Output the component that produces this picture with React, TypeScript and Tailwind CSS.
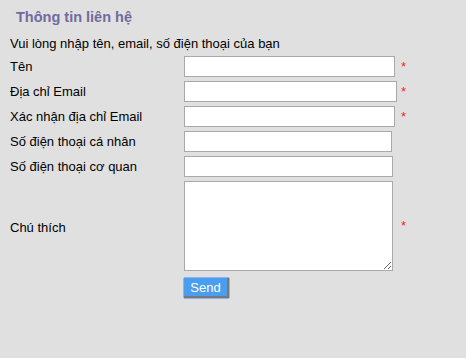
import React from 'react'

const rows = [
  { label: 'Tên', w: 'w-[211px]', req: true },
  { label: 'Địa chỉ Email', w: 'w-[213px]', req: true },
  { label: 'Xác nhận địa chỉ Email', w: 'w-[211px]', req: true },
  { label: 'Số điện thoại cá nhân', w: 'w-[208px]', req: false },
  { label: 'Số điện thoại cơ quan', w: 'w-[209px]', req: false },
]

export default function App() {
  return (
    <div className="w-[466px] h-[358px] bg-[#e0e0e0] px-[10px] text-[13px] leading-[16px] text-black font-['Liberation_Sans',Arial,sans-serif]">
      {/* Tiêu đề */}
      <h2 className="pt-[8px] pl-[6px] text-[14.5px] leading-[18px] font-bold text-[#6f6b9f]">
        Thông tin liên hệ
      </h2>

      <p className="mt-[10px]">Vui lòng nhập tên, email, số điện thoại của bạn</p>

      <div className="mt-[4px] flex flex-col gap-[4px]">
        {rows.map((r) => (
          <div key={r.label} className="flex items-center h-[21px]">
            <label className="w-[174px]">{r.label}</label>
            <div className="w-[217px]">
              <input
                type="text"
                className={`${r.w} h-[21px] bg-white border border-[#a9a9a9] outline-none block`}
              />
            </div>
            {r.req && <span className="text-[#ff2020]">*</span>}
          </div>
        ))}

        {/* Chú thích */}
        <div className="flex items-center h-[90px]">
          <label className="w-[174px] pt-[4px]">Chú thích</label>
          <div className="w-[217px]">
            <textarea className="w-[209px] h-[90px] bg-white border border-[#a9a9a9] outline-none block" />
          </div>
          <span className="text-[#ff2020]">*</span>
        </div>
      </div>

      <div className="mt-[6px] pl-[173px]">
        <button className="w-[47px] h-[22px] rounded-[2px] border border-[#8fb0f2] p-0 block">
          <span className="flex items-center justify-center w-full h-full bg-[#4a9ef0] border-r-2 border-b-2 border-[#787878] text-white text-[13px] leading-none">
            Send
          </span>
        </button>
      </div>
    </div>
  )
}
